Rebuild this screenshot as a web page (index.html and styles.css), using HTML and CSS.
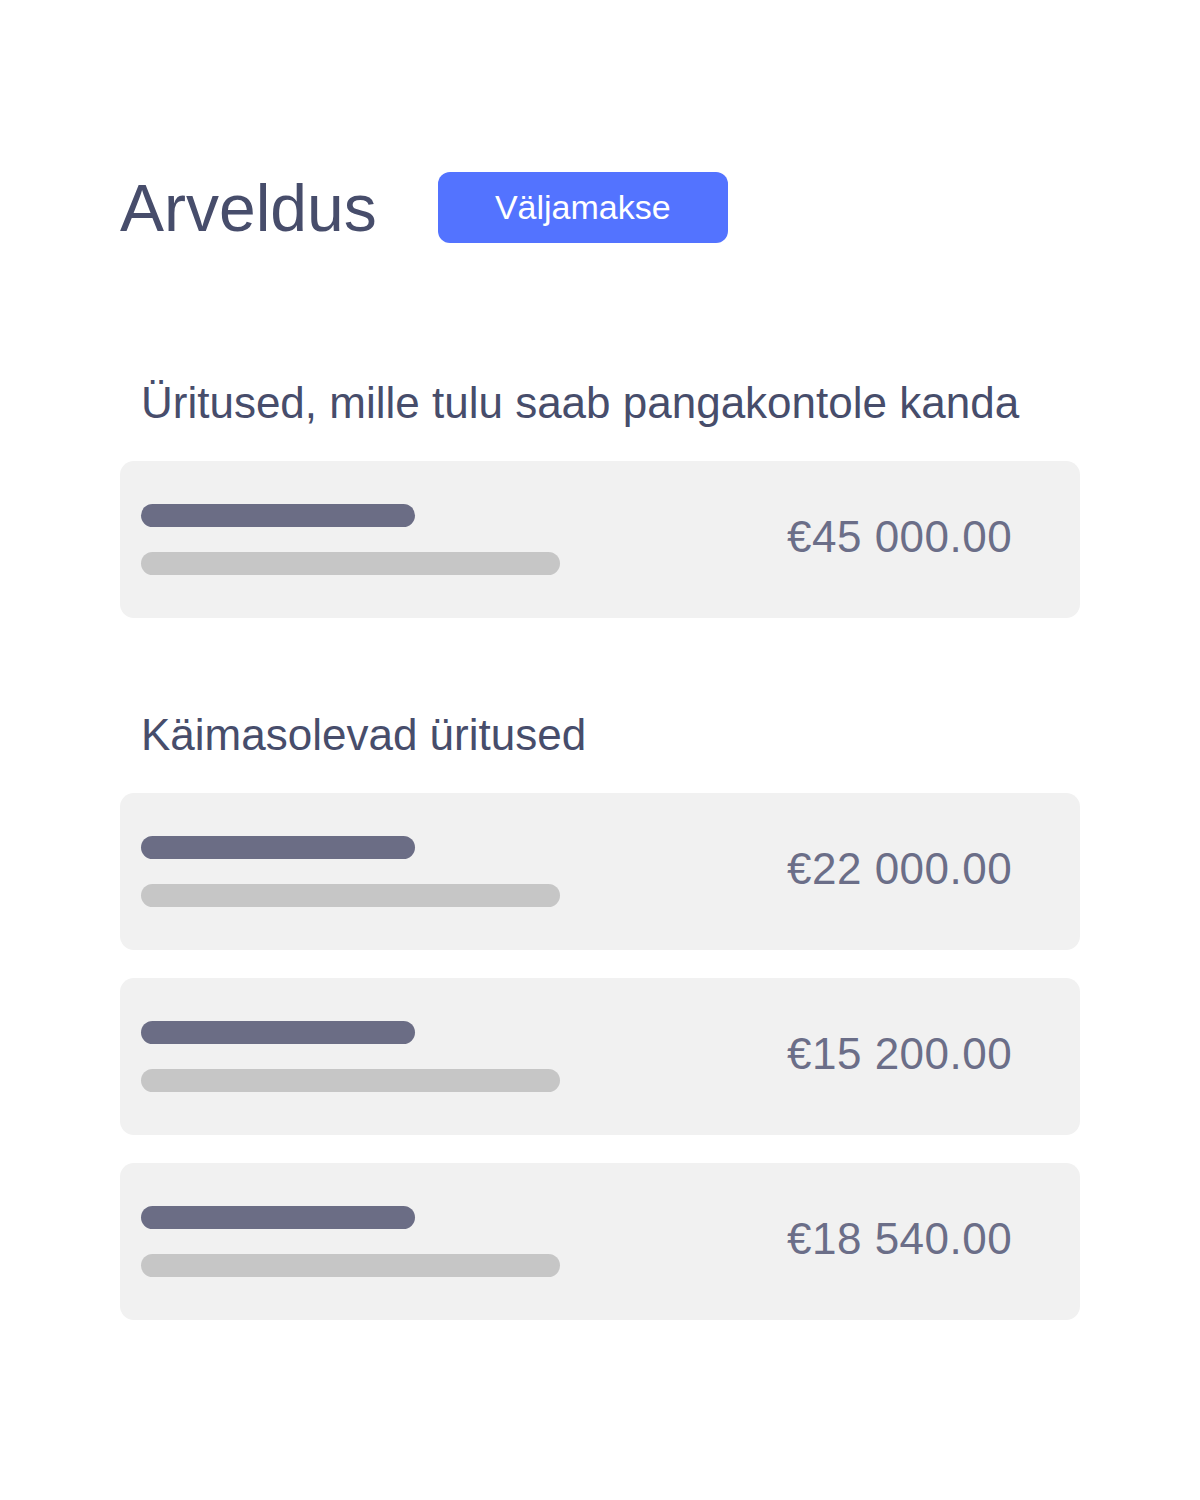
FILE: index.html
```html
<!DOCTYPE html>
<html lang="et">
<head>
  <meta charset="UTF-8" />
  <meta name="viewport" content="width=device-width, initial-scale=1.0"/>
  <title>Arveldus</title>
  <link rel="stylesheet" href="styles.css">
</head>
<body>

  <main class="page">
    <header class="page-head">
      <h1>Arveldus</h1>
      <button class="payout-button">Väljamakse</button>
    </header>

    <!-- Payable events -->
    <section class="group">
      <h2>Üritused, mille tulu saab pangakontole kanda</h2>
      <div class="event-card">
        <div class="event-lines">
          <span class="line line-title"></span>
          <span class="line line-sub"></span>
        </div>
        <div class="amount">€45 000.00</div>
      </div>
    </section>

    <!-- Ongoing events -->
    <section class="group">
      <h2>Käimasolevad üritused</h2>
      <div class="event-card">
        <div class="event-lines">
          <span class="line line-title"></span>
          <span class="line line-sub"></span>
        </div>
        <div class="amount">€22 000.00</div>
      </div>
      <div class="event-card">
        <div class="event-lines">
          <span class="line line-title"></span>
          <span class="line line-sub"></span>
        </div>
        <div class="amount">€15 200.00</div>
      </div>
      <div class="event-card">
        <div class="event-lines">
          <span class="line line-title"></span>
          <span class="line line-sub"></span>
        </div>
        <div class="amount">€18 540.00</div>
      </div>
    </section>
  </main>

</body>
</html>
```

FILE: styles.css
```css
* {
  margin: 0;
  padding: 0;
  box-sizing: border-box;
}

body {
  font-family: 'Liberation Sans', Arial, sans-serif;
  background-color: #ffffff;
  color: #474d6b;
}

.page {
  width: 960px;
  margin-left: 120px;
  padding-top: 172px;
}

.page-head {
  display: flex;
  align-items: center;
  gap: 61px;
  height: 71px;
}

.page-head h1 {
  font-size: 66px;
  font-weight: 400;
  line-height: 1;
  color: #474d6b;
}

.payout-button {
  width: 290px;
  height: 71px;
  background-color: #5373ff;
  color: #ffffff;
  border: none;
  border-radius: 12px;
  font-family: inherit;
  font-size: 34px;
  cursor: pointer;
}

.group h2 {
  font-size: 44px;
  font-weight: 400;
  line-height: 1;
  padding-left: 21px;
  margin-bottom: 36px;
}

.group:nth-of-type(1) {
  margin-top: 138px;
}

.group:nth-of-type(2) {
  margin-top: 95px;
}

.event-card {
  display: flex;
  align-items: center;
  justify-content: space-between;
  height: 157px;
  background-color: #f1f1f1;
  border-radius: 14px;
  padding: 0 0 0 21px;
  margin-bottom: 28px;
}

.event-lines {
  display: flex;
  flex-direction: column;
  gap: 25px;
}

.line {
  display: block;
  height: 23px;
  border-radius: 12px;
}

.line-title {
  width: 274px;
  background-color: #6b6d85;
}

.line-sub {
  width: 419px;
  background-color: #c6c6c6;
}

.amount {
  width: 293px;
  padding-bottom: 6px;
  font-size: 44px;
  letter-spacing: 0.5px;
  color: #6b6e88;
}
```
